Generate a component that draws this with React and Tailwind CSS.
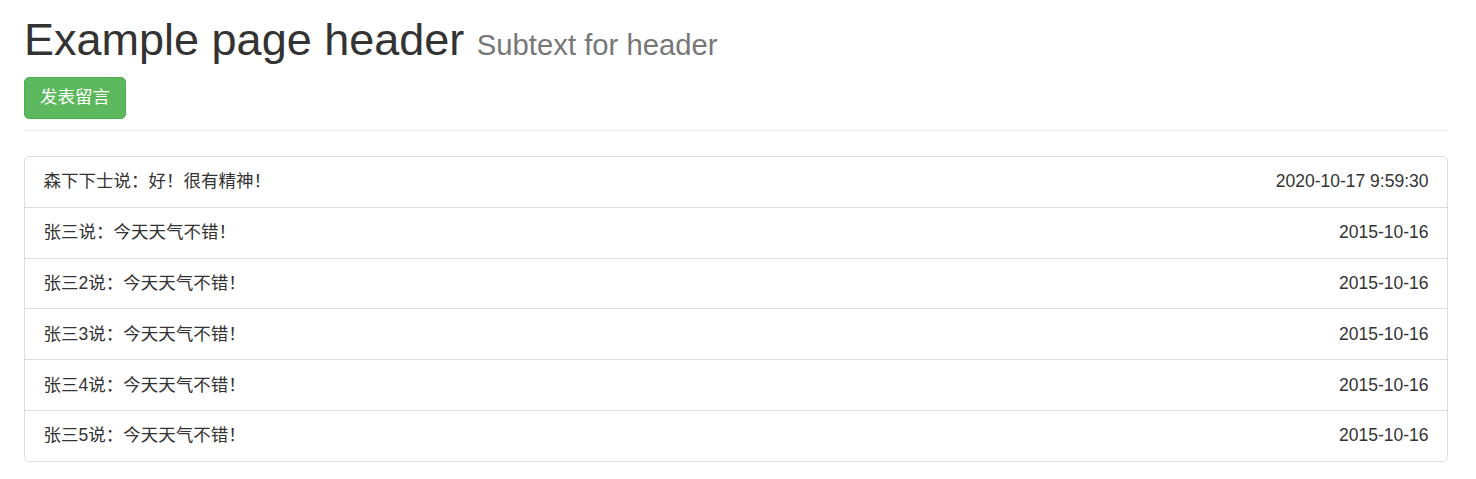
const messages = [
  { text: "森下下士说：好！很有精神！", time: "2020-10-17 9:59:30" },
  { text: "张三说：今天天气不错！", time: "2015-10-16" },
  { text: "张三2说：今天天气不错！", time: "2015-10-16" },
  { text: "张三3说：今天天气不错！", time: "2015-10-16" },
  { text: "张三4说：今天天气不错！", time: "2015-10-16" },
  { text: "张三5说：今天天气不错！", time: "2015-10-16" },
];

function App() {
  return (
    <div className="min-h-screen bg-white pl-[24px] pr-[28px] pt-[15px] text-[#333] font-['Liberation_Sans','Noto_Sans_CJK_SC',sans-serif]">
      <div className="pb-[11.5px] mb-[25px] border-b border-[#eee]">
        <h1 className="text-[45px] leading-[1.1] font-normal mb-[12px] whitespace-nowrap">
          Example page header{" "}
          <small className="text-[29.25px] text-[#777] leading-none">
            Subtext for header
          </small>
        </h1>
        <button className="px-[15px] py-[7.5px] text-[17.5px] leading-[25px] text-white bg-[#5cb85c] border border-[#4cae4c] rounded-[5px]">
          发表留言
        </button>
      </div>

      <ul className="border border-[#ddd] rounded-[5px] text-[17.5px]">
        {messages.map((m, i) => (
          <li
            key={i}
            className={`flex justify-between items-center px-[18.5px] py-[12.4px] leading-[25px] ${
              i > 0 ? "border-t border-[#ddd]" : ""
            }`}
          >
            <span>{m.text}</span>
            <span>{m.time}</span>
          </li>
        ))}
      </ul>
    </div>
  );
}

export default App;
